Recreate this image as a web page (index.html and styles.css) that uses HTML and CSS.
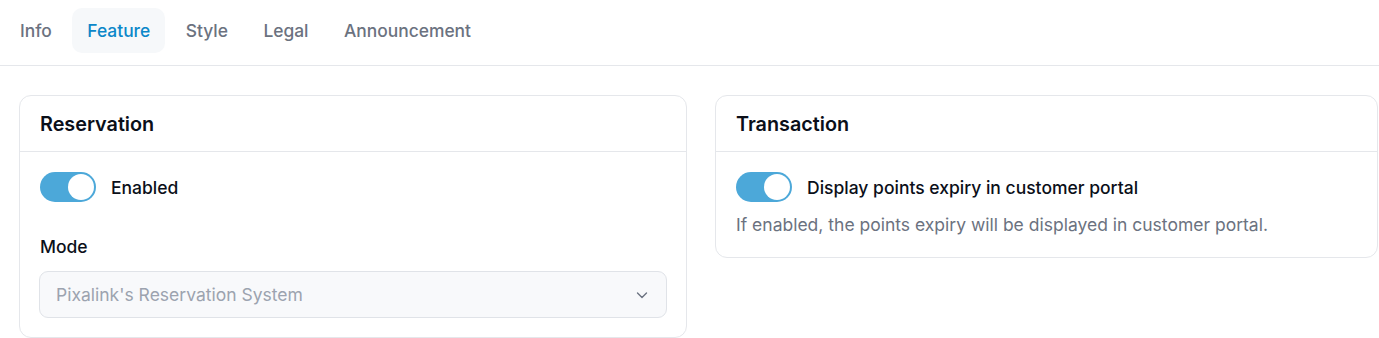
FILE: index.html
```html
<html>
<head>
<title>Settings</title>
<meta charset='utf-8'/>
<link rel="stylesheet" href="styles.css">
</head>
<body>
<div class='tabs'>
<a class='tab'>Info</a>
<a class='tab active'>Feature</a>
<a class='tab'>Style</a>
<a class='tab'>Legal</a>
<a class='tab'>Announcement</a>
</div>
<div class='cards'>
<div class='card'>
<div class='card-head'>Reservation</div>
<div class='card-body'>
<label class='switch-row'><span class='switch on'><span class='knob'></span></span>Enabled</label>
<div class='field-label'>Mode</div>
<div class='select'>
<span>Pixalink's Reservation System</span>
<svg width='16' height='16' viewBox='0 0 16 16'><path d='M3.5 6 L8 10.5 L12.5 6' fill='none' stroke='#6b7280' stroke-width='1.4' stroke-linecap='round' stroke-linejoin='round'/></svg>
</div>
</div>
</div>
<div class='card'>
<div class='card-head'>Transaction</div>
<div class='card-body'>
<label class='switch-row'><span class='switch on'><span class='knob'></span></span>Display points expiry in customer portal</label>
<p class='hint'>If enabled, the points expiry will be displayed in customer portal.</p>
</div>
</div>
</div>
</body>
</html>
```
FILE: styles.css
```css
body {
	margin: 0;
	font-family: Inter, "Noto Sans", sans-serif;
	color: #111827;
	background: #fff;
	overflow: hidden;
}
.tabs {
	display: flex;
	gap: 5.5px;
	padding: 8px 5px 12px 5px;
	border-bottom: 1px solid #e5e7eb;
}
.tab {
	display: flex;
	align-items: center;
	height: 45px;
	padding: 0 15px;
	font-size: 17.4px;
	font-weight: 500;
	color: #6b7280;
	border-radius: 10px;
}
.tab.active {
	background: #f6f8fa;
	color: #0b87c9;
}
.cards {
	display: grid;
	grid-template-columns: 668px 663px;
	gap: 28px;
	align-items: start;
	padding: 29px 0 0 19px;
}
.card {
	border: 1px solid #e5e7eb;
	border-radius: 12px;
	background: #fff;
}
.card-head {
	height: 55px;
	display: flex;
	align-items: center;
	padding: 0 20px;
	font-size: 19.8px;
	font-weight: 600;
	color: #0b0f19;
	border-bottom: 1px solid #e5e7eb;
}
.card-body {
	padding: 20px 20px 19px 20px;
}
.switch-row {
	display: flex;
	align-items: center;
	gap: 15px;
	font-size: 17.5px;
	font-weight: 500;
	color: #0b0f19;
}
.switch {
	width: 56px;
	height: 30px;
	border-radius: 15px;
	background: #d1d5db;
	padding: 2px;
	box-sizing: border-box;
	display: flex;
}
.switch.on {
	background: #4ca8d9;
	justify-content: flex-end;
}
.knob {
	width: 26px;
	height: 26px;
	border-radius: 50%;
	background: #fff;
}
.field-label {
	margin-top: 32px;
	font-size: 17.5px;
	font-weight: 500;
	line-height: 26px;
	color: #0b0f19;
}
.select {
	margin-top: 11px;
	height: 47px;
	box-sizing: border-box;
	display: flex;
	align-items: center;
	justify-content: space-between;
	padding: 0 16px;
	background: #f8f9fb;
	border: 1px solid #e0e3e8;
	border-radius: 9px;
	font-size: 17.5px;
	color: #9ca3af;
	margin-left: -1px;
	margin-right: -1px;
}
.hint {
	margin: 10px 0 0 0;
	font-size: 17.5px;
	line-height: 26px;
	color: #6b7280;
}
```
